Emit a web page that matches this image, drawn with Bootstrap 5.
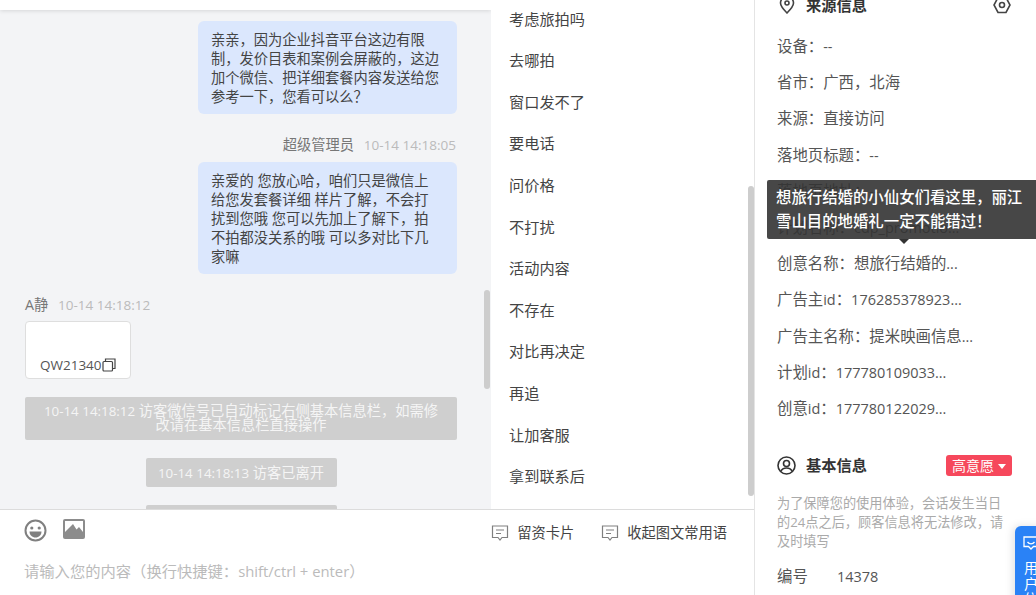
<!doctype html>
<html lang="zh-CN"><head><meta charset="utf-8"><title>会话</title>
<link href="https://cdn.jsdelivr.net/npm/bootstrap@5.3.0/dist/css/bootstrap.min.css" rel="stylesheet">
<style>
html,body{height:595px;overflow:hidden}
body{font-family:"Open Sans","Noto Sans CJK SC",sans-serif;font-size:15.3px;color:#444;background:#fff;text-spacing-trim:space-all}
.latin{font-size:.94em}
.latin-wide{font-size:.97em}
.shell{width:1036px;height:595px;position:relative;overflow:hidden}
.leftside{width:755px;height:595px;border-right:1px solid #e4e4e4}
.upper{height:510px;border-bottom:1px solid #dcdcdc}
.chat{width:491px;background:#f3f4f6;position:relative;overflow:hidden;padding:21px 34px 0 25px;font-size:14.25px}
.chat::before{content:"";position:absolute;left:0;right:0;top:0;height:10px;background:#fff;box-shadow:0 1px 4px rgba(0,0,0,.12)}
.bubble{width:259px;margin-left:173px;background:#dbe7fd;border-radius:6px;padding:9px 16px 8px 13px;line-height:19px;color:#444}
.who{height:19px;line-height:19px;color:#777}
.who span{color:#bbb;margin-left:6px;font-size:.95em}
.who1{margin-top:21px;text-align:right;padding-right:1px}
.who2{margin-top:21px}
.codebox{width:106px;height:58px;margin-top:7px;background:#fff;border:1px solid #dedede;border-radius:4px;padding:29px 0 0 14px;line-height:20px;color:#555;display:flex;align-items:center;font-size:13.5px}
.notice{background:#cfcfcf;color:#f5f5f5;border-radius:2px;text-align:center;line-height:14px}
.n1{margin-top:18px;padding:7px 16px 7px;height:43px}
.n2{margin:18px auto 0;width:191px;height:29px;line-height:29px}
.n3{margin:18px auto 0;width:191px;height:29px}
.scrollthumb{position:absolute;width:6px;border-radius:3px;background:#cdcdcd}
.st1{left:484px;top:290px;height:99px}
.st2{left:748px;top:186px;height:310px}
.phrases{width:263px;background:#fff;padding:0 0 0 18px;overflow:hidden}
.phrase{height:41.6px;line-height:41.6px;color:#444;font-size:15.2px}
.phrase-first{margin-top:-1.4px}
.inputbar{height:85px;position:relative}
.toolrow{padding:9px 0 0 24px;height:44px}
.linkbtn{color:#444;font-size:14.25px;line-height:20px;padding:4px 27px 0 0}
.linkbtn svg{margin-right:8px}
.firstaction{margin-right:27px}
.inputhint{color:#bbb;padding-left:24px;margin-top:7px;line-height:20px}
.rightside{width:281px;padding-left:22px;overflow:hidden;font-size:15.4px}
.headrow{height:22px;margin-top:-6px;padding-right:25px}
.headrow>svg:first-child{margin-left:2px}
.headtitle{font-weight:700;color:#333;font-size:15.25px;margin-left:11px}
.basic .headtitle{margin-left:10px}
.inforow{height:36.2px;line-height:36.2px;white-space:nowrap;color:#555}
.infolist{margin-top:13px}
.basic{margin-top:27px;height:22px;padding-right:24px}
.levelbadge{width:66px;height:21px;background:#f6485c;color:#fff;border-radius:3px;line-height:21px;text-align:center;font-size:14px}
.levelbadge::after{content:"";display:inline-block;border:4px solid transparent;border-top:5px solid #fff;border-bottom:0;margin-left:4px;vertical-align:2px}
.hint{width:232px;color:#aaa;font-size:13.2px;line-height:19px;margin-top:18px}
.idrow{margin-top:16px;line-height:20px;color:#555}
.idrow b{font-weight:400;display:inline-block;width:60px}
.tipbox{position:absolute;left:767px;top:180px;width:285px;height:59px;background:rgba(51,51,51,.9);color:#fff;border-radius:2px;padding:6px 25px 6px 9px;line-height:24px;font-size:15.4px;font-weight:500}
.tipbox::after{content:"";position:absolute;left:132px;top:59px;border:5px solid transparent;border-top-color:#333;border-bottom:0}
.sidetab{position:absolute;left:1015px;top:526px;width:30px;height:80px;background:#2a82f6;border-radius:6px 0 0 0;color:#fff;padding:10px 0 0 8px;line-height:15.5px;font-size:14px;box-shadow:-2px 0 8px rgba(0,0,0,.12)}
.sidetab span{display:block;width:14px;margin:10px 0 0 1px}
</style></head>
<body>
<div class="shell d-flex">
  <div class="leftside d-flex flex-column">
    <div class="upper d-flex">
      <div class="chat">
        <div class="bubble">亲亲，因为企业抖音平台这边有限制，发价目表和案例会屏蔽的，这边加个微信、把详细套餐内容发送给您参考一下，您看可以么？</div>
        <div class="who who1">超级管理员 <span class="latin">10-14 14:18:05</span></div>
        <div class="bubble mt-2">亲爱的 您放心哈，咱们只是微信上给您发套餐详细 样片了解，不会打扰到您哦 您可以先加上了解下，拍不拍都没关系的哦 可以多对比下几家嘛</div>
        <div class="who who2">A静 <span class="latin">10-14 14:18:12</span></div>
        <div class="codebox">QW21340<svg width="14" height="14" viewBox="0 0 14 14" fill="none" stroke="#444" stroke-width="1.2"><rect x="1" y="3.5" width="9.5" height="9.5" rx="1"/><path d="M3.5 3.5V1h9.5v9.5h-2.5"/></svg></div>
        <div class="notice n1"><span class="latin">10-14 14:18:12</span> 访客微信号已自动标记右侧基本信息栏，如需修改请在基本信息栏直接操作</div>
        <div class="notice n2"><span class="latin">10-14 14:18:13</span> 访客已离开</div>
        <div class="notice n3"></div>
      </div>
      <div class="phrases">
        <div class="phrase phrase-first">考虑旅拍吗</div>
        <div class="phrase">去哪拍</div>
        <div class="phrase">窗口发不了</div>
        <div class="phrase">要电话</div>
        <div class="phrase">问价格</div>
        <div class="phrase">不打扰</div>
        <div class="phrase">活动内容</div>
        <div class="phrase">不存在</div>
        <div class="phrase">对比再决定</div>
        <div class="phrase">再追</div>
        <div class="phrase">让加客服</div>
        <div class="phrase">拿到联系后</div>
      </div>
    </div>
    <div class="inputbar">
      <div class="toolrow d-flex align-items-start">
        <svg width="23" height="23" viewBox="0 0 23 23" class="me-3"><circle cx="11.5" cy="11.5" r="10" fill="none" stroke="#808080" stroke-width="2"/><circle cx="7.8" cy="9" r="1.6" fill="#808080"/><circle cx="15.2" cy="9" r="1.6" fill="#808080"/><path d="M5.5 12.5h12c0 3.5-2.600 6-6 6s-6-2.500-6-6z" fill="#808080"/></svg>
        <svg width="22" height="21" viewBox="0 0 22 21"><rect width="22" height="20" rx="2" fill="#8c8c8c"/><path d="M2 2h18v11l-4-5-2.500 2.500L10 5l-8 8z" fill="#fff"/></svg>
        <div class="ms-auto d-flex linkbtn">
          <span class="d-flex align-items-center firstaction"><svg width="18" height="16" viewBox="0 0 17 16" fill="none" stroke="#808080" stroke-width="1.2"><path d="M1 1h15v11.500h-5.500L8.500 15l-2-2.500H1z"/><path d="M4.500 5h8M4.500 8.500h5"/></svg>留资卡片</span>
          <span class="d-flex align-items-center"><svg width="18" height="16" viewBox="0 0 17 16" fill="none" stroke="#808080" stroke-width="1.2"><path d="M1 1h15v11.500h-5.500L8.500 15l-2-2.500H1z"/><path d="M4.500 5h8M4.500 8.500h5"/></svg>收起图文常用语</span>
        </div>
      </div>
      <div class="inputhint">请输入您的内容（换行快捷键：<span class="latin-wide">shift/ctrl + enter</span>）</div>
    </div>
  </div>
  <div class="rightside">
    <div class="headrow d-flex align-items-center">
      <svg width="16" height="18" viewBox="0 0 16 18" fill="none" stroke="#444" stroke-width="1.600"><path d="M8 17C4 13 1.500 10 1.500 7a6.500 6.500 0 0 1 13 0c0 3-2.500 6-6.500 10z"/><circle cx="8" cy="7" r="2"/></svg>
      <span class="headtitle">来源信息</span>
      <svg class="ms-auto" width="18" height="18" viewBox="0 0 18 18" fill="none" stroke="#444" stroke-width="1.600"><path d="M5 1.500h8L17 9l-4 7.500H5L1 9z"/><circle cx="9" cy="9" r="2.500"/></svg>
    </div>
    <div class="infolist">
      <div class="inforow">设备：<span class="latin">--</span></div>
      <div class="inforow">省市：广西，北海</div>
      <div class="inforow">来源：直接访问</div>
      <div class="inforow">落地页标题：<span class="latin">--</span></div>
      <div class="inforow">落地页地址：<span class="latin">--</span></div>
      <div class="inforow">计划名称：<span class="latin">cdp_promotio...</span></div>
      <div class="inforow">创意名称：想旅行结婚的<span class="latin">...</span></div>
      <div class="inforow">广告主<span class="latin">id</span>：<span class="latin">176285378923...</span></div>
      <div class="inforow">广告主名称：提米映画信息<span class="latin">...</span></div>
      <div class="inforow">计划<span class="latin">id</span>：<span class="latin">177780109033...</span></div>
      <div class="inforow">创意<span class="latin">id</span>：<span class="latin">177780122029...</span></div>
    </div>
    <div class="basic d-flex align-items-center">
      <svg width="19" height="19" viewBox="0 0 19 19" fill="none" stroke="#333" stroke-width="1.600"><circle cx="9.500" cy="9.500" r="8.500"/><circle cx="9.500" cy="7.500" r="3"/><path d="M3.800 15.500c1-2.500 3-3.500 5.700-3.500s4.700 1 5.700 3.500"/></svg>
      <span class="headtitle">基本信息</span>
      <span class="levelbadge ms-auto">高意愿</span>
    </div>
    <div class="hint">为了保障您的使用体验，会话发生当日的24点之后，顾客信息将无法修改，请及时填写</div>
    <div class="idrow"><b>编号</b><span class="latin">14378</span></div>
  </div>
  <div class="scrollthumb st1"></div>
  <div class="scrollthumb st2"></div>
  <div class="tipbox">想旅行结婚的小仙女们看这里，丽江雪山目的地婚礼一定不能错过！</div>
  <div class="sidetab"><svg class="d-block" width="16" height="14" viewBox="0 0 16 14" fill="none" stroke="#fff" stroke-width="1.300"><path d="M1 1h14v9.500h-4.500L8 13l-2.500-2.500H1z"/><path d="M4.500 6c1 1.300 2 1.800 3.500 1.800S10.500 7.300 11.500 6"/></svg><span>用户信息</span></div>
</div>
<script src="https://cdn.jsdelivr.net/npm/bootstrap@5.3.0/dist/js/bootstrap.bundle.min.js"></script>
</body></html>
